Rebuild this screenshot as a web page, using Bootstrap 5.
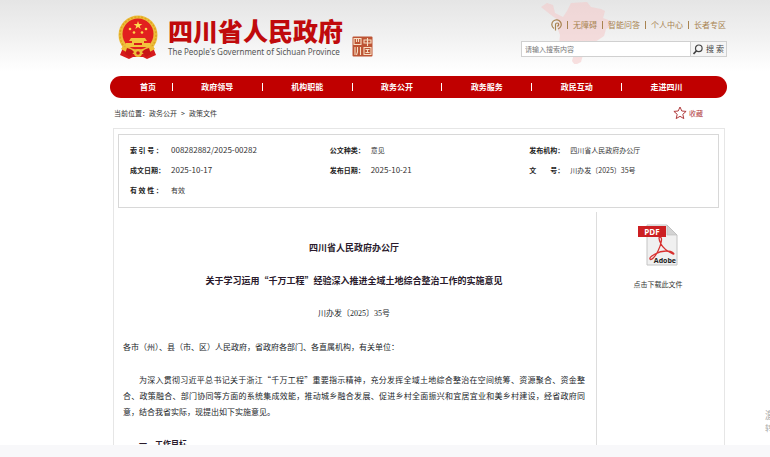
<!DOCTYPE html>
<html lang="zh-CN">
<head>
<meta charset="utf-8">
<meta name="viewport" content="width=device-width, initial-scale=1">
<title>四川省人民政府办公厅</title>
<link href="https://cdn.jsdelivr.net/npm/bootstrap@5.3.0/dist/css/bootstrap.min.css" rel="stylesheet">
<style>
body{font-family:"Noto Sans CJK SC",sans-serif;font-size:7px;line-height:12px;color:#333;background:#fff}
a{color:inherit;text-decoration:none}
.page-view{background:linear-gradient(#e5e5e5,#f1f1f1 36px,#fff 72px)}
.shell{padding-left:110px;padding-right:43px}
.site-head{height:76px;padding-top:14px}
.brand{padding-left:7px;gap:9px}
.brand-name{font-size:25px;line-height:30px;font-weight:900;color:#c00a0c;margin:1px 0 0}
.brand-en{font-family:"Noto Sans",sans-serif;font-size:8px;line-height:10px;color:#555;margin-top:2px}
.seal{margin-top:22px}
.tools{width:206px}
.tool-links{font-size:8px;color:#a88350;height:22px;padding-right:1px;gap:5px}
.tool-links i{width:1px;height:8px;background:#a88350}
.map-art{position:absolute;left:18px;top:-12px}
.search{height:16px;margin-top:5px;border:1px solid #d0d0d0;background:#fff}
.search input{font-size:7px;line-height:12px;padding:0 3px;border:0;outline:0;min-width:0;background:transparent;color:#333}
.search input::placeholder{color:#777;opacity:1}
.search button{font-size:8px;line-height:12px;width:36px;border:0;border-left:1px solid #d0d0d0;background:#f5f5f5;color:#444;padding:0;gap:3px;white-space:nowrap}
.main-nav{height:22px;border-radius:11px;background:#c00000;color:#fff;font-size:8px;font-weight:700;padding:0 16px 0 14px}
.main-nav li{flex:90 1 0}
.main-nav li:first-child{flex-grow:48}
.main-nav li+li::before{content:"";width:1px;height:8px;background:#fff}
.main-nav a{flex:1;text-align:center}
.crumbs{height:30px;padding:0 24px 0 4px}
.crumb-trail{gap:4px}
.favorite{color:#b03a3c;gap:2px}
.sheet{margin:0 2px 0 3px;border:1px solid #e6e6e6;border-bottom:0;padding:5px 5px 0 4px}
.meta-box{border:1px solid #d8d8d8;padding:5px 0 7px;margin:0}
.meta-box>div{padding:0 0 0 11px;height:20px}
.meta-box dt{width:41px;white-space:pre;color:#222}
.meta-box .num{font-size:8px}
.text-body{font-size:8px;line-height:16px;padding:28px 11px 0 5px;color:#222;text-align:justify;margin-top:4px}
.text-body p,.text-body h1,.text-body h2{margin:0 0 17px}
.text-body h1{font-size:9px;line-height:16px;font-weight:700;text-align:center;color:#2a1a2c}
.text-body h2{font-size:8px;line-height:16px;font-weight:700;text-indent:2em;color:#2a1a2c}
.text-body .doc-no{font-family:"Liberation Serif","Noto Sans CJK SC",serif;text-align:center}
.text-body .indent{text-indent:2em;margin-bottom:16px}
.aside{flex:0 0 123px;border-left:1px solid #ddd;margin-top:4px;padding-top:12px}
.aside a{gap:12px}
.foot-strip{height:12px;background:#f8f8fa}
.watermark{position:absolute;left:765px;right:0;top:409px;color:#aaa;white-space:nowrap;overflow:hidden;font-size:10px}
.watermark small{font-size:8px}
</style>
<script src="https://cdn.jsdelivr.net/npm/bootstrap@5.3.0/dist/js/bootstrap.bundle.min.js"></script>
</head>
<body class="vh-100 overflow-hidden d-flex flex-column position-relative">
<div class="page-view shell flex-grow-1 overflow-hidden d-flex flex-column">
  <header class="site-head d-flex justify-content-between flex-shrink-0">
    <div class="brand d-flex align-items-start">
      <svg width="42" height="46" viewBox="0 0 42 46" aria-hidden="true">
        <path d="M7 31 3 41l9 4 4-2h10l4 2 9-4-4-10z" fill="#d61a1c"/>
        <circle cx="21" cy="21" r="19.500" fill="#edbd3c"/>
        <circle cx="21" cy="21" r="18" fill="none" stroke="#dda51f" stroke-width="1.500" stroke-dasharray="2 1.500"/>
        <circle cx="21" cy="20" r="15.500" fill="#e2201f"/>
        <path d="m21 7 1 3h3.300l-2.600 2 1 3-2.700-1.900-2.700 1.900 1-3-2.600-2H20z" fill="#ffdc50"/>
        <g fill="#ffd54a"><circle cx="13" cy="15" r="1.300"/><circle cx="29" cy="15" r="1.300"/><circle cx="17" cy="18.500" r="1.300"/><circle cx="25" cy="18.500" r="1.300"/></g>
        <path d="M14 24h14l2 3h-3v2h6v4H9v-4h6v-2h-3z" fill="#f3c43d"/>
        <path d="M17 29h8v2h-8z" fill="#d61a1c"/>
        <path d="M6 32q7 2 10 5h10q3-3 10-5l2 3-9 5H13l-9-5z" fill="#f0bd36"/>
        <path d="M10 34q5 1 7 4l-4 5-5-3zM32 34q-5 1-7 4l4 5 5-3z" fill="#c81516"/>
        <circle cx="21" cy="39" r="4" fill="#edbd3c"/><circle cx="21" cy="39" r="1.800" fill="#cc191a"/>
      </svg>
      <div>
        <div class="brand-name">四川省人民政府</div>
        <div class="brand-en">The People's Government of Sichuan Province</div>
      </div>
      <svg class="seal" width="21" height="21" viewBox="0 0 21 21" aria-hidden="true">
        <rect x=".5" y=".5" width="20" height="20" rx="1" fill="#bd5434"/>
        <g fill="none" stroke="#f7dfc4" stroke-width="1.100"><path d="M2 2.500h7v6H2zM4.500 3v3M6.500 3v3M12 4h7v3h-7zM15.500 2v8M3 11v8M5.500 11v5l-1 3M8.500 11v8M12 11.500h7v7h-7zM13.500 13.500h4M13.500 16.500h4M15.500 13v4"/></g>
      </svg>
    </div>
    <div class="tools position-relative">
      <svg class="map-art" width="72" height="62" viewBox="0 0 72 62" aria-hidden="true">
        <path d="M2 5 8 1l6 2 2 8 8 4 4-6 4-8 16-1 4 5 10 2 4 2-2 7 8 3 2 5-7 3-2 7-9 6-3 9-9 4-2 7-6 3-3-4 2-7-7-5-8-5 1-9-3-8 1-7-7-5z" fill="#f4c9c9" opacity=".55"/>
      </svg>
      <div class="tool-links position-relative d-flex align-items-center justify-content-end">
        <a href="#" aria-label="政务服务"><svg class="d-block" width="11" height="12" viewBox="0 0 11 12" fill="none" stroke="#a88350" stroke-width="1.200"><path d="M3 9.500A4.700 4.700 0 1 1 7 10M4.500 11.500V5.500a1.600 1.600 0 1 1 1.600 1.700"/></svg></a>
        <i></i><a href="#">无障碍</a><i></i><a href="#">智能问答</a><i></i><a href="#">个人中心</a><i></i><a href="#">长者专区</a>
      </div>
      <form class="search position-relative d-flex">
        <input class="flex-grow-1" type="text" placeholder="请输入搜索内容" aria-label="请输入搜索内容">
        <button type="button" class="d-flex align-items-center justify-content-center"><svg width="10" height="11" viewBox="0 0 10 11" fill="none" stroke="#444" stroke-width="1.200"><circle cx="5.800" cy="4.300" r="3.300"/><path d="m3.500 6.700-3 3.300" stroke-width="1.700"/></svg>搜 索</button>
      </form>
    </div>
  </header>
  <nav class="flex-shrink-0">
    <ul class="main-nav d-flex list-unstyled m-0 align-items-stretch">
      <li class="d-flex align-items-center"><a href="#">首页</a></li>
      <li class="d-flex align-items-center"><a href="#">政府领导</a></li>
      <li class="d-flex align-items-center"><a href="#">机构职能</a></li>
      <li class="d-flex align-items-center"><a href="#">政务公开</a></li>
      <li class="d-flex align-items-center"><a href="#">政务服务</a></li>
      <li class="d-flex align-items-center"><a href="#">政民互动</a></li>
      <li class="d-flex align-items-center"><a href="#">走进四川</a></li>
    </ul>
  </nav>
  <div class="crumbs d-flex align-items-center justify-content-between flex-shrink-0">
    <div class="crumb-trail d-flex"><span>当前位置：<a href="#">政务公开</a></span><span>&gt;</span><a href="#">政策文件</a></div>
    <a href="#" class="favorite d-flex align-items-center"><svg width="14" height="14" viewBox="0 0 14 14" fill="none" stroke="#b03a3c"><path d="m7 1 1.800 4 4.300.4-3.300 2.900 1 4.300L7 10.300l-3.800 2.300 1-4.300L.9 5.400 5.200 5z"/></svg>收藏</a>
  </div>
  <main class="sheet flex-grow-1 d-flex flex-column">
    <dl class="meta-box row row-cols-3 flex-shrink-0">
      <div class="d-flex align-items-center"><dt>索 引 号 ：</dt><dd class="num m-0">008282882/2025-00282</dd></div>
      <div class="d-flex align-items-center"><dt>公文种类：</dt><dd class="m-0">意见</dd></div>
      <div class="d-flex align-items-center"><dt>发布机构：</dt><dd class="m-0">四川省人民政府办公厅</dd></div>
      <div class="d-flex align-items-center"><dt>成文日期：</dt><dd class="num m-0">2025-10-17</dd></div>
      <div class="d-flex align-items-center"><dt>发布日期：</dt><dd class="num m-0">2025-10-21</dd></div>
      <div class="d-flex align-items-center"><dt>文　　号：</dt><dd class="m-0">川办发〔2025〕35号</dd></div>
      <div class="d-flex align-items-center"><dt>有 效 性 ：</dt><dd class="m-0">有效</dd></div>
    </dl>
    <div class="d-flex flex-grow-1">
      <article class="text-body flex-grow-1">
        <h1>四川省人民政府办公厅</h1>
        <h1>关于学习运用“千万工程”经验深入推进全域土地综合整治工作的实施意见</h1>
        <p class="doc-no">川办发〔2025〕35号</p>
        <p>各市（州）、县（市、区）人民政府，省政府各部门、各直属机构，有关单位：</p>
        <p class="indent">为深入贯彻习近平总书记关于浙江“千万工程”重要指示精神，充分发挥全域土地综合整治在空间统筹、资源聚合、资金整合、政策融合、部门协同等方面的系统集成效能，推动城乡融合发展、促进乡村全面振兴和宜居宜业和美乡村建设，经省政府同意，结合我省实际，现提出如下实施意见。</p>
        <h2>一、工作目标</h2>
      </article>
      <aside class="aside text-center">
        <a href="#" class="d-flex flex-column align-items-center">
          <svg width="42" height="42" viewBox="0 0 42 42" aria-hidden="true">
            <path d="M10 1h20l10 10v30H10z" fill="#f0f0f0" stroke="#c4c4c4"/>
            <path d="M30 1v10h10z" fill="#d3d3d3" stroke="#bbb" stroke-width=".6"/>
            <path d="M23 13c3 0 1 8-2 14s-7 10-8 8 8-8 16-8 9 4 7 3-9-4-12-10-2-7-1-7z" fill="none" stroke="#d8302f" stroke-width="1.300"/>
            <rect x="1" y="2" width="28" height="11" fill="#cc1f22"/>
            <text x="15" y="10.500" text-anchor="middle" font-family="Open Sans,sans-serif" font-size="8" font-weight="700" fill="#fff">PDF</text>
            <text x="39" y="39" text-anchor="end" font-family="Open Sans,sans-serif" font-size="7" font-weight="700" fill="#222">Adobe</text>
          </svg>
          <span>点击下载此文件</span>
        </a>
      </aside>
    </div>
  </main>
</div>
<footer class="foot-strip flex-shrink-0"></footer>
<div class="watermark">激活 Windows<br><small>转到“设置”以激活 Windows。</small></div>
</body>
</html>
